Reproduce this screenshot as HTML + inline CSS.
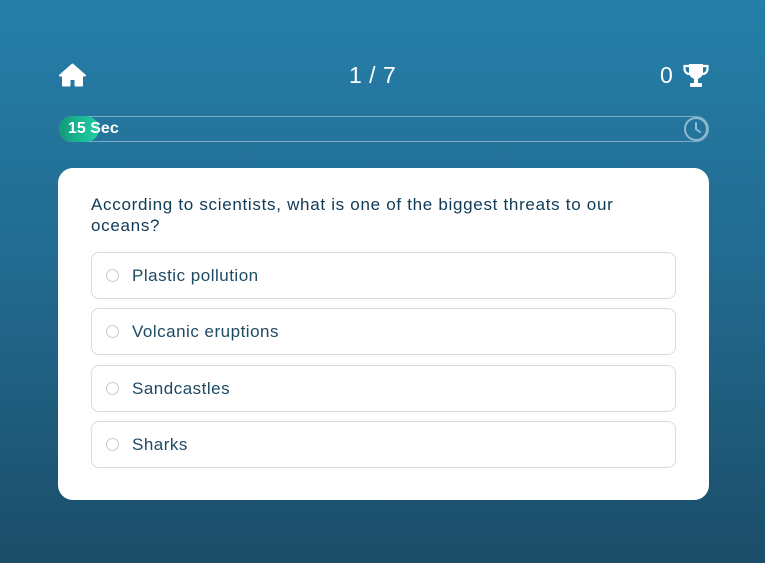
<!DOCTYPE html>
<html><head><meta charset="utf-8"><style>
*{margin:0;padding:0;box-sizing:border-box}
html,body{width:765px;height:563px;overflow:hidden}
body{background:linear-gradient(180deg,#257fa9 0%,#22698e 50%,#1b4d68 100%);font-family:"Liberation Sans",sans-serif;position:relative;color:#fff}
.abs{position:absolute}
.bar{left:59px;top:116px;width:650px;height:26px;border:1.5px solid rgba(255,255,255,.4);border-radius:13px}
.fill{left:59px;top:116px;width:40px;height:26px;border-radius:13px;background:linear-gradient(90deg,#119a78,#22d0a8)}
.card{left:58px;top:168px;width:651px;height:332px;background:#fff;border-radius:15px}
.q{left:91px;top:194px;width:560px;font-size:17px;line-height:21px;color:#0f3a55;letter-spacing:.7px}
.opt{left:91px;width:585px;height:47px;border:1px solid #d5dde2;border-radius:8px;color:#1d4a63;font-size:17px;letter-spacing:.5px}
.opt span{position:absolute;left:40px;top:13px}
.opt i{position:absolute;left:14px;top:16px;width:13px;height:13px;border:1.5px solid #c3ccd2;border-radius:50%}
</style></head><body>
<svg class="abs" style="left:58px;top:63px" width="29" height="24" viewBox="0 0 29 24"><path d="M14.5 1.5 L2 12.5 L5 12.5 L5 22.5 L11.5 22.5 L11.5 16 L17.5 16 L17.5 22.5 L24 22.5 L24 12.5 L27 12.5 Z" fill="#fff" stroke="#fff" stroke-linejoin="round" stroke-width="2"/></svg>
<div class="abs" style="left:349px;top:62px;font-size:23px;letter-spacing:.5px">1 / 7</div>
<div class="abs" style="left:660px;top:62px;font-size:23px">0</div>
<svg class="abs" style="left:682px;top:63px" width="28" height="25" viewBox="0 0 28 25"><path d="M7 1h14v8a7 7 0 0 1-14 0z" fill="#fff"/><path d="M7 3H2.5v3a5 5 0 0 0 5 5M21 3h4.5v3a5 5 0 0 1-5 5" fill="none" stroke="#fff" stroke-width="2.2"/><rect x="12" y="15" width="4" height="5" fill="#fff"/><rect x="8" y="20" width="12" height="4" rx="1" fill="#fff"/></svg>
<div class="abs bar"></div>
<div class="abs fill"></div>
<div class="abs" style="left:68px;top:120px;font-size:16px;font-weight:bold">15 Sec</div>
<svg class="abs" style="left:683px;top:116px" width="26" height="26" viewBox="0 0 26 26"><circle cx="13" cy="13" r="11" fill="none" stroke="rgba(255,255,255,.5)" stroke-width="2"/><path d="M13 7v6l4 3" fill="none" stroke="rgba(255,255,255,.5)" stroke-width="2" stroke-linecap="round"/></svg>
<div class="abs card"></div>
<div class="abs q">According to scientists, what is one of the biggest threats to our oceans?</div>
<div class="abs opt" style="top:252px"><i></i><span>Plastic pollution</span></div>
<div class="abs opt" style="top:308px"><i></i><span>Volcanic eruptions</span></div>
<div class="abs opt" style="top:365px"><i></i><span>Sandcastles</span></div>
<div class="abs opt" style="top:421px"><i></i><span>Sharks</span></div>
</body></html>
